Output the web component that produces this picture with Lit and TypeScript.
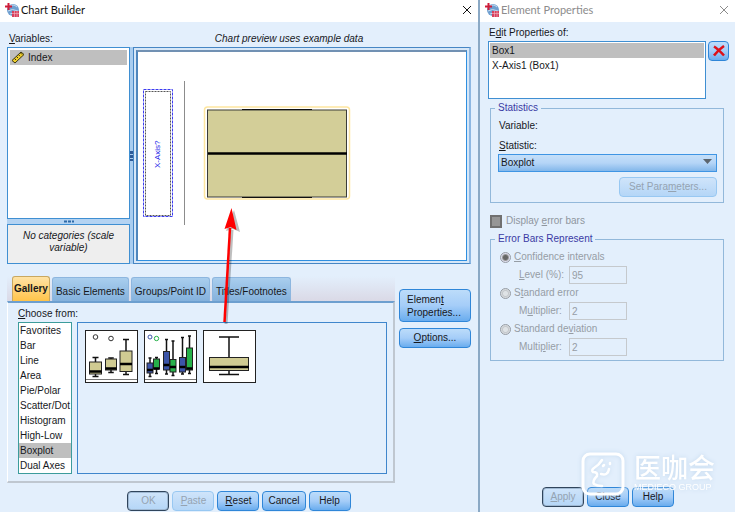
import { LitElement, html, css, svg } from "lit";
import { customElement, property } from "lit/decorators.js";
import { classMap } from "lit/directives/class-map.js";

const controls = css`
  * { box-sizing: border-box; }
  :host {
    font: 10px/14px "Liberation Sans", Arial, sans-serif;
    color: #16181c;
  }
  button, input, select { font: inherit; color: inherit; margin: 0; }
  u { text-underline-offset: 1px; }
  .titlebar {
    display: flex;
    align-items: center;
    gap: 2px;
    background: #fff;
    padding: 0 5px;
  }
  .titlebar h1 { flex: 1; margin: 0; font: 11px/16px Lato, "Noto Sans", sans-serif; }
  .titlebar svg { display: block; }
  .close { display: flex; padding: 0; border: 0; background: none; }
  .btn {
    height: 20px;
    min-width: 42px;
    padding: 0 5px;
    border: 1px solid #2f86d8;
    border-radius: 4px;
    background: linear-gradient(#bcdcfa, #a5cdf8 50%, #69acee);
    white-space: nowrap;
  }
  .btn:disabled { color: #95a3b1; border-color: #98c8f2; background: linear-gradient(#cfe4fa, #b4d6f7); }
  .btn.default { border: 1px solid #30455c; box-shadow: inset 0 0 0 1px #9fb8d2; }
  .listbox { margin: 0; padding: 2px; list-style: none; background: #fff; border: 1px solid #3f8fd2; }
  .listbox li { height: 15px; line-height: 15px; white-space: nowrap; }
  .listbox .selected { background: #bfbfbf; }
`;

const appIcon = svg`
  <circle cx="8" cy="7" r="6" fill="#6f9fd0"/>
  <path d="M4 4Q8 0 12 4M3 8Q7 5 13 8M5 11Q8 9 11 11" stroke="#c3d9ee" fill="none"/>
  <path d="M3.500 0v7M0 3.500h7" stroke="#d01c38" stroke-width="2"/>
  <path d="M7 8h7v6H7z" fill="#d8405c"/>
  <path d="M7 10.500h7M9.500 8v6M12 8v6" stroke="#f3b8c4" stroke-width=".6"/>`;

@customElement("title-bar")
class TitleBar extends LitElement {
  @property() label = "";
  @property({ type: Boolean }) inactive = false;
  static styles = [controls, css`
    .titlebar { height: 22px; padding-bottom: 2px; color: #111; }
    .inactive { color: #8c8c8c; }
  `];
  render() {
    return html`<header class=${classMap({ titlebar: true, inactive: this.inactive })}>
      <svg width="14" height="14" viewBox="0 0 14 14" aria-hidden="true">${appIcon}</svg>
      <h1>${this.label}</h1>
      <button class="close" aria-label="Close window">
        <svg width="12" height="10" viewBox="0 0 12 10"><path d="M2 1l8 8M10 1l-8 8" stroke="currentColor" fill="none"/></svg>
      </button>
    </header>`;
  }
}

type Box = [x: number, top: number, q3: number, median: number, q1: number, bottom: number, width: number, fill: string];

const TAN = "#d0cb92", BLUE = "#3c55a8", GREEN = "#26b14a";

const drawBox = ([x, top, q3, median, q1, bottom, w, fill]: Box) => svg`
  <path d="M${x} ${top}V${bottom}M${x - w / 4} ${top}h${w / 2}M${x - w / 4} ${bottom}h${w / 2}" stroke="#111" stroke-width="1.500"/>
  <rect x=${x - w / 2} y=${q3} width=${w} height=${q1 - q3} fill=${fill} stroke="#222"/>
  <path d="M${x - w / 2} ${median}h${w}" stroke="#000" stroke-width="2.500"/>`;

const thumbs = [
  {
    name: "Simple Boxplot",
    art: svg`<circle cx="10.500" cy="7" r="2.300" fill="none" stroke="#333"/><circle cx="26" cy="8.500" r="2.300" fill="none" stroke="#333"/>
      ${([[10.5, 27.5, 32, 41.5, 44, 46.5, 12, TAN], [26, 28, 29, 38.5, 40, 42.5, 11, TAN], [41, 9.5, 21, 34, 41.5, 44.5, 12, TAN]] as Box[]).map(drawBox)}
      <path d="M1 49.500h51" stroke="#777"/>`,
  },
  {
    name: "Clustered Boxplot",
    art: svg`<circle cx="6" cy="7" r="2" fill="none" stroke="${BLUE}"/><circle cx="12.500" cy="8.500" r="2.200" fill="none" stroke="${GREEN}"/>
      ${([[6, 28, 33, 40, 43, 46.5, 6, BLUE], [12.5, 27.5, 29, 38.5, 39, 43.5, 6, GREEN], [22.5, 9.5, 21.5, 35, 40, 44, 6, BLUE],
        [29, 11, 29.5, 37, 42, 45.5, 6, GREEN], [38.5, 7.5, 27.5, 37, 42, 44, 6, BLUE], [45.5, 6, 18, 38.5, 40, 43.5, 6, GREEN]] as Box[]).map(drawBox)}
      <path d="M1 49.500h51" stroke="#777"/>`,
  },
  {
    name: "1-D Boxplot",
    art: svg`<path d="M26 7v20M16 7h20M26 41v4M16 44.500h20" stroke="#111" stroke-width="1.500"/>
      <rect x="6.500" y="27.500" width="39" height="13" fill="${TAN}" stroke="#222"/><path d="M6 37h40" stroke="#000" stroke-width="2.500"/>`,
  },
];

const kinds = ["Favorites", "Bar", "Line", "Area", "Pie/Polar", "Scatter/Dot", "Histogram", "High-Low", "Boxplot", "Dual Axes"];
const tabs = ["Gallery", "Basic Elements", "Groups/Point ID", "Titles/Footnotes"];

@customElement("chart-builder")
class ChartBuilder extends LitElement {
  static styles = [controls, css`
    :host { display: block; position: relative; }
    .body { padding: 1px 7px 0; }
    .captions { display: grid; grid-template-columns: 126px 1fr; height: 24px; align-items: end; padding-bottom: 1px; }
    .captions span { padding-left: 2px; }
    .captions em { text-align: center; padding-right: 26px; }
    .work { display: grid; grid-template-columns: 123px 3px minmax(0, 1fr); height: 217px; }
    .left { display: flex; flex-direction: column; }
    .vars { flex: 1; }
    .vars li { display: flex; align-items: center; gap: 3px; padding-left: 1px; }
    .hsplit { height: 5px; display: flex; justify-content: center; align-items: center; background: #b4d3f2; }
    .vsplit { display: flex; align-items: center; background: #a9cdf0; }
    .cats {
      height: 40px; margin: 0; padding: 5px 8px; text-align: center; line-height: 12px;
      font-style: italic; background: #eee; border: 1px solid #3f8fd2;
    }
    .frame { border: 1px solid #4686c4; border-right: 2px solid #8db7e2; padding: 2px; background: #d6e7f8; }
    .canvas { height: 100%; background: #fff; border: 1px solid #2f8fe0; border-top: 2px solid #7191b3; border-left: 2px solid #4f86bd; overflow: hidden; }
    .canvas svg { display: block; }
    .lower { display: flex; gap: 4px; margin-top: 12px; }
    .tabbed { flex: 1; min-width: 0; }
    .tabs { display: flex; align-items: flex-end; gap: 2px; height: 25px; padding-left: 5px; background: linear-gradient(#e3effc, #dad9e6); }
    .tab {
      height: 24px; padding: 4px 3px 0; white-space: nowrap; border: 1px solid #8db6df; border-bottom: 0; border-radius: 3px 3px 0 0;
      background: linear-gradient(#a9ceee, #84b1dc);
    }
    .tab.on { height: 25px; padding: 0 1px; font-weight: bold; border-color: #c9a860; background: linear-gradient(#ffe3a5, #ffc44a); }
    .panel { border: 1px solid #fff; border-top: 2px solid #6d9fcf; border-right: 2px solid #bfc7d0; border-bottom: 2px solid #bfc7d0; padding: 4px 6px 7px 10px; }
    .choose { display: block; height: 15px; }
    .pick { display: grid; grid-template-columns: 54px minmax(0, 1fr); gap: 5px; }
    .kinds { padding: 0; border-color: #3c9c9c; }
    .kinds li { padding-left: 1px; }
    .gallery { display: flex; align-items: flex-start; gap: 6px; padding: 7px; border: 1px solid #3f86cc; }
    .thumb { width: 53px; height: 53px; padding: 0; border: 1px solid #222; background: #fff; }
    .thumb svg { display: block; }
    .side { width: 72px; display: flex; flex-direction: column; gap: 6px; padding-top: 13px; }
    .side .tall { height: 33px; line-height: 13px; text-align: left; padding: 0 7px; white-space: normal; }
    .actions { display: flex; justify-content: center; gap: 3px; padding: 8px 0 1px; }
    .arrow { position: absolute; left: 214px; top: 202px; pointer-events: none; }
  `];

  render() {
    return html`
      <title-bar label="Chart Builder"></title-bar>
      <div class="body">
        <div class="captions">
          <span id="vars"><u>V</u>ariables:</span>
          <em>Chart preview uses example data</em>
        </div>
        <div class="work">
          <div class="left">
            <ul class="listbox vars" role="listbox" aria-labelledby="vars">
              <li class="selected" role="option" aria-selected="true">
                <svg width="14" height="13" viewBox="0 0 14 13" aria-hidden="true">
                  <path d="M1 9.500L10 1l3 2.500L4 12z" fill="#f0cf2c" stroke="#3a3510"/>
                  <path d="M3.500 7.500l1.500 1.500M5.500 5.500l1.500 1.500M7.500 3.700l1.500 1.500M9.500 2l1.500 1.500" stroke="#3a3510"/>
                </svg>Index
              </li>
            </ul>
            <div class="hsplit"><svg width="12" height="3" aria-hidden="true"><path d="M1 1.500h10" stroke="#2d6aa8" stroke-width="2" stroke-dasharray="3 1"/></svg></div>
            <p class="cats">No categories (scale variable)</p>
          </div>
          <div class="vsplit"><svg width="3" height="12" aria-hidden="true"><path d="M1.500 1v10" stroke="#2d5a98" stroke-width="3" stroke-dasharray="3 1"/></svg></div>
          <div class="frame"><div class="canvas">
            <svg width="328" height="208" viewBox="138 52 328 208" font-family="Liberation Sans, Arial, sans-serif">
              <rect x="143.500" y="89.500" width="29" height="127" fill="none" stroke="#3c3cf0" stroke-dasharray="3 1"/>
              <rect x="145.500" y="91.500" width="25" height="124" fill="none" stroke="#555" stroke-dasharray="2 1"/>
              <text transform="translate(160 168) rotate(-90)" font-size="8" fill="#2525e8">X-Axis?</text>
              <path d="M184.500 81v144" stroke="#8c8c8c"/>
              <rect x="204.500" y="107" width="145" height="92" rx="3" fill="#fff" stroke="#fee6a0" stroke-width="1.500"/>
              <rect x="207.500" y="110" width="139" height="87" fill="#d3ce98" stroke="#3c3c36"/>
              <path d="M242 109.500h70M242 197.500h70" stroke="#111"/>
              <path d="M208 153.500h139" stroke="#000" stroke-width="2.500"/>
            </svg>
          </div></div>
        </div>
        <div class="lower">
          <div class="tabbed">
            <div class="tabs" role="tablist">
              ${tabs.map((t, i) => html`<button role="tab" aria-selected=${i === 0} class=${classMap({ tab: true, on: i === 0 })}>${t}</button>`)}
            </div>
            <div class="panel" role="tabpanel">
              <span class="choose" id="choose"><u>C</u>hoose from:</span>
              <div class="pick">
                <ul class="listbox kinds" role="listbox" aria-labelledby="choose">
                  ${kinds.map((k) => html`<li role="option" aria-selected=${k === "Boxplot"} class=${classMap({ selected: k === "Boxplot" })}>${k}</li>`)}
                </ul>
                <div class="gallery">
                  ${thumbs.map((t) => html`<button class="thumb" aria-label=${t.name}><svg width="51" height="51" viewBox="1 1 51 51">${t.art}</svg></button>`)}
                </div>
              </div>
            </div>
          </div>
          <div class="side">
            <button class="btn tall">Elemen<u>t</u> Properties...</button>
            <button class="btn"><u>O</u>ptions...</button>
          </div>
        </div>
        <div class="actions">
          <button class="btn default" disabled>OK</button>
          <button class="btn" disabled><u>P</u>aste</button>
          <button class="btn"><u>R</u>eset</button>
          <button class="btn">Cancel</button>
          <button class="btn">Help</button>
        </div>
      </div>
      <svg class="arrow" width="34" height="124" viewBox="214 202 34 124" aria-hidden="true">
        <g opacity=".25" transform="translate(2 2)"><path d="M224 322L230 228" stroke="#000" stroke-width="3"/><path d="M232 208l6 22-7-3-7 2z"/></g>
        <path d="M224.500 322L230 228" stroke="#f00" stroke-width="2.500"/>
        <path d="M231.500 208l5 22-6-3-6 2z" fill="#f00"/>
      </svg>`;
  }
}

@customElement("element-properties")
class ElementProperties extends LitElement {
  static styles = [controls, css`
    :host { display: flex; flex-direction: column; position: relative; border-left: 2px solid #8ba9c5; }
    .body { flex: 1; display: flex; flex-direction: column; padding: 4px 6px 5px 8px; }
    .caption { padding-left: 1px; height: 15px; }
    .edit { display: flex; gap: 2px; align-items: flex-start; }
    .edit .listbox { flex: 1; height: 58px; padding: 1px; border: 1px solid #3f8fd2; }
    .edit li { padding-left: 2px; }
    .remove { flex: none; width: 21px; padding: 0; min-width: 0; display: flex; align-items: center; justify-content: center; }
    fieldset { min-width: 0; margin: 0 5px 0 2px; border: 1px solid #92b8da; }
    legend { margin-left: -3px; padding: 0 3px; color: #3a3aa4; }
    .stats { margin-top: 2px; padding: 4px 6px 5px 7px; }
    .stats p { margin: 0 0 6px; padding-left: 1px; }
    .stats label { display: block; padding-left: 1px; margin-bottom: 1px; }
    .drop { position: relative; }
    select {
      display: block; width: 100%; height: 18px; padding: 0 2px; appearance: none; border: 1px solid #3f95e4; border-radius: 0;
      background: linear-gradient(#c5dff9, #b5d5f7 50%, #83b7ea);
    }
    .drop svg { position: absolute; right: 5px; top: 5px; pointer-events: none; }
    .params { display: block; width: 98px; margin: 5px 0 0 auto; }
    .check { display: flex; align-items: center; gap: 4px; height: 14px; margin: 11px 2px 4px; color: #8f969e; }
    .check input { appearance: none; width: 12px; height: 13px; background: #969696; border: 2px solid #707070; }
    .errors { padding: 2px 6px 4px 9px; color: #969da5; }
    .errors legend { margin-left: -5px; }
    .radio { display: flex; align-items: center; gap: 3px; height: 18px; }
    .radio input { appearance: none; width: 11px; height: 11px; border: 1px solid #969ca3; border-radius: 50%; background: radial-gradient(#dfe3e6 2px, #c4c8cc 3px, #e8ebee 5px); }
    .radio input:checked { background: radial-gradient(#666 2px, #999 3px, #dde 4px); }
    .value { display: grid; grid-template-columns: 50px 58px; height: 18px; align-items: center; padding-left: 19px; }
    .value input { height: 18px; width: 58px; padding: 0 2px; border: 1px solid #c5c9cd; border-radius: 0; background: #e3effc; }
    .actions { display: flex; gap: 3px; margin-top: auto; padding-left: 54px; }
  `];

  render() {
    return html`
      <title-bar label="Element Properties" inactive></title-bar>
      <div class="body">
        <span class="caption" id="edit">E<u>d</u>it Properties of:</span>
        <div class="edit">
          <ul class="listbox" role="listbox" aria-labelledby="edit">
            <li class="selected" role="option" aria-selected="true">Box1</li>
            <li role="option" aria-selected="false">X-Axis1 (Box1)</li>
          </ul>
          <button class="btn remove" aria-label="Remove">
            <svg width="14" height="12" viewBox="0 0 14 12"><path d="M2 1.500Q6 4 12 10.500M12 1Q6 5 2 10.500" stroke="#dd1018" stroke-width="2.500" fill="none"/></svg>
          </button>
        </div>
        <fieldset class="stats">
          <legend>Statistics</legend>
          <p>Variable:</p>
          <label for="stat"><u>S</u>tatistic:</label>
          <div class="drop">
            <select id="stat"><option>Boxplot</option></select>
            <svg width="9" height="6" viewBox="0 0 9 6" aria-hidden="true"><path d="M0 0h9L4.500 5z" fill="#5c656e"/></svg>
          </div>
          <button class="btn params" disabled>Set Para<u>m</u>eters...</button>
        </fieldset>
        <label class="check"><input type="checkbox" disabled><span>Display <u>e</u>rror bars</span></label>
        <fieldset class="errors">
          <legend>Error Bars Represent</legend>
          <label class="radio"><input type="radio" name="bars" checked disabled><span><u>C</u>onfidence intervals</span></label>
          <label class="value"><span><u>L</u>evel (%):</span><input value="95" disabled></label>
          <label class="radio"><input type="radio" name="bars" disabled><span>S<u>t</u>andard error</span></label>
          <label class="value"><span>M<u>u</u>ltiplier:</span><input value="2" disabled></label>
          <label class="radio"><input type="radio" name="bars" disabled><span>Standard de<u>v</u>iation</span></label>
          <label class="value"><span>Multi<u>p</u>lier:</span><input value="2" disabled></label>
        </fieldset>
        <div class="actions">
          <button class="btn default" disabled><u>A</u>pply</button>
          <button class="btn">Close</button>
          <button class="btn">Help</button>
        </div>
      </div>`;
  }
}

@customElement("app-root")
class AppRoot extends LitElement {
  static styles = css`
    :host {
      display: grid; grid-template-columns: minmax(0, 1fr) 257px; position: relative;
      margin: 0 3px 2px 0; background: #e3effc;
    }
    .mark { position: absolute; right: 20px; bottom: 16px; display: flex; gap: 9px; color: #fff; pointer-events: none; filter: drop-shadow(0 0 2px #c4d9ee); }
    .mark svg { display: block; }
    .words { display: flex; flex-direction: column; }
    .cn { font: 500 27px/30px "Noto Sans CJK SC", sans-serif; }
    .en { font: 9px/11px "Liberation Sans", Arial, sans-serif; white-space: nowrap; }
  `;
  render() {
    return html`
      <chart-builder></chart-builder>
      <element-properties></element-properties>
      <div class="mark">
        <svg width="44" height="44" viewBox="0 0 44 44" fill="none" stroke="#fff" stroke-linecap="round" aria-hidden="true">
          <rect x="2" y="2" width="40" height="40" rx="7" stroke-width="3"/>
          <path d="M21 8Q18 13 13 16Q10 18 12 20Q17 20 16 24Q11 29 13 32Q16 34 21 34M20 22Q27 24 28 17M22 14l1-1M29 11l0 1" stroke-width="2.500"/>
        </svg>
        <div class="words"><span class="cn">医咖会</span><span class="en">MEDIECO GROUP</span></div>
      </div>`;
  }
}
